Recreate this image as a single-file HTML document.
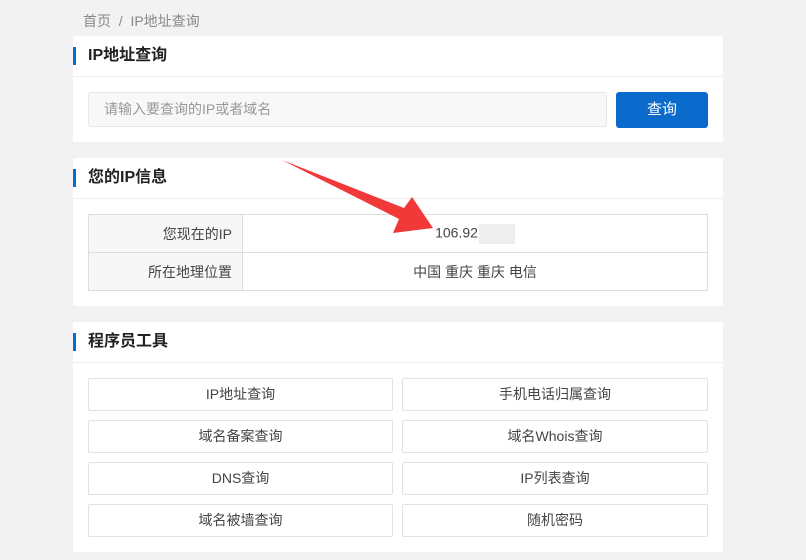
<!DOCTYPE html><html><head><meta charset="utf-8"><style>
body{margin:0;background:#f2f2f2;font-family:"Liberation Sans","Noto Sans CJK SC",sans-serif;width:806px;height:560px;overflow:hidden;position:relative;color:#333}
.bc{position:absolute;left:83px;top:11px;font-size:14px;color:#888}
.card{position:absolute;left:73px;width:650px;background:#fff;border-radius:2px}
.hd{height:40px;border-bottom:1px solid #eee;position:relative;font-size:16px;font-weight:bold;line-height:40px;padding-left:15px;color:#222}
.hd:before{content:"";position:absolute;left:0;top:11px;width:3px;height:18px;background:#0b6bcd}
.inp{position:absolute;left:15px;top:56px;width:502px;height:33px;border:1px solid #e6e6e6;border-radius:3px;background:#f8f8f8;font-size:14px;color:#999;line-height:33px;padding-left:15px}
.btn{position:absolute;left:543px;top:56px;width:92px;height:36px;background:#0b6bcd;color:#fff;border-radius:3px;text-align:center;line-height:36px;font-size:15px}
table{position:absolute;left:15px;top:56px;width:620px;border-collapse:collapse;font-size:14px;color:#444}
td{border:1px solid #ddd;height:37px;text-align:center;padding:0}
td.l{width:143px;background:#f7f7f7;text-align:right;padding-right:10px}
.t{position:absolute;width:305px;height:33px;border:1px solid #e2e2e2;border-radius:2px;text-align:center;line-height:31px;font-size:14px;color:#444;box-sizing:border-box}
</style></head><body>
<div class="bc">首页 &nbsp;/&nbsp; IP地址查询</div>
<div class="card" style="top:36px;height:106px"><div class="hd">IP地址查询</div><div class="inp">请输入要查询的IP或者域名</div><div class="btn">查询</div></div>
<div class="card" style="top:158px;height:148px"><div class="hd">您的IP信息</div>
<table><tr><td class="l">您现在的IP</td><td>106.92<span style="display:inline-block;width:36px;height:20px;background:#eee;vertical-align:middle;margin-left:1px"></span></td></tr><tr><td class="l">所在地理位置</td><td>中国 重庆 重庆 电信</td></tr></table></div>
<div class="card" style="top:322px;height:230px"><div class="hd">程序员工具</div>
<div class="t" style="left:15px;top:56px">IP地址查询</div><div class="t" style="left:329px;top:56px;width:306px">手机电话归属查询</div>
<div class="t" style="left:15px;top:98px">域名备案查询</div><div class="t" style="left:329px;top:98px;width:306px">域名Whois查询</div>
<div class="t" style="left:15px;top:140px">DNS查询</div><div class="t" style="left:329px;top:140px;width:306px">IP列表查询</div>
<div class="t" style="left:15px;top:182px">域名被墙查询</div><div class="t" style="left:329px;top:182px;width:306px">随机密码</div>
</div>
<svg style="position:absolute;left:0;top:0" width="806" height="560"><polygon points="282,160 404,208 412,197 433,228 393,233 399,219" fill="#f2393a"/></svg>
</body></html>
